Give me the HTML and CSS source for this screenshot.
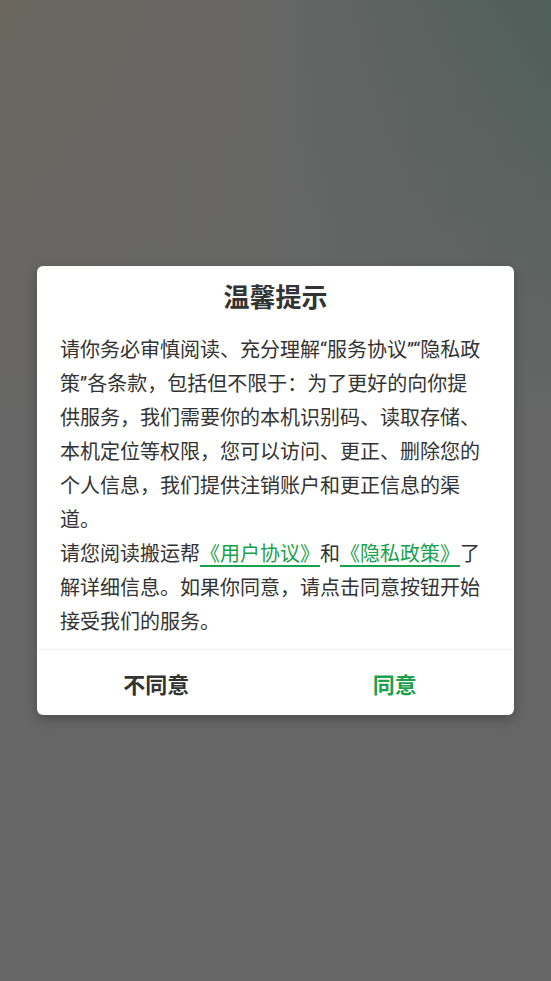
FILE: index.html
```html
<!DOCTYPE html>
<html>
	<head>
		<meta charset="utf-8">
		<title>温馨提示</title>
		<link rel="stylesheet" href="styles.css">
	</head>
	<body>
		<div class="dialog">
			<div class="title">温馨提示</div>
			<div class="content">
				<p>请你务必审慎阅读、充分理解“服务协议”“隐私政策”各条款，包括但不限于：为了更好的向你提供服务，我们需要你的本机识别码、读取存储、本机定位等权限，您可以访问、更正、删除您的个人信息，我们提供注销账户和更正信息的渠道。</p>
				<p>请您阅读搬运帮<a class="link">《用户协议》</a>和<a class="link">《隐私政策》</a>了解详细信息。如果你同意，请点击同意按钮开始接受我们的服务。</p>
			</div>
			<div class="buttons">
				<div class="btn">不同意</div>
				<div class="btn agree">同意</div>
			</div>
		</div>
	</body>
</html>
```

FILE: styles.css
```css
*{
	margin:0;
	padding:0;
	box-sizing:border-box;
}
html{
	background-color:#666;
}
body{
	height:100vh;
	display:flex;
	align-items:center;
	justify-content:center;
	font-family:Roboto,"Noto Sans CJK SC",sans-serif;
	color:#333;
	background-color:#666;
	/* soft tint at the top, fades into plain gray */
	background-image:
		linear-gradient(to bottom, rgba(102,102,102,0) 0, #666 420px),
		linear-gradient(to right, #6b675e, #666 50%, #4e5f59);
}
.dialog{
	width:477px;
	background-color:#fff;
	border-radius:6px;
	box-shadow:0 4px 12px rgba(0,0,0,0.25);
	overflow:hidden;
}
.title{
	padding-top:14px;
	height:50px;
	line-height:36px;
	font-size:26px;
	font-weight:bold;
	text-align:center;
}
.content{
	padding:17px 30px 10px 23px;
	font-size:20px;
	line-height:34px;
	border-bottom:1px solid #f0f0f0;
}
.link{
	color:#1aa14b;
	text-decoration:underline;
	text-underline-offset:4px;
}
.buttons{
	display:flex;
	height:65px;
}
.btn{
	flex:1;
	display:flex;
	align-items:center;
	justify-content:center;
	font-size:22px;
	font-weight:bold;
	color:#333;
}
.agree{
	color:#1aa14b;
}
```
